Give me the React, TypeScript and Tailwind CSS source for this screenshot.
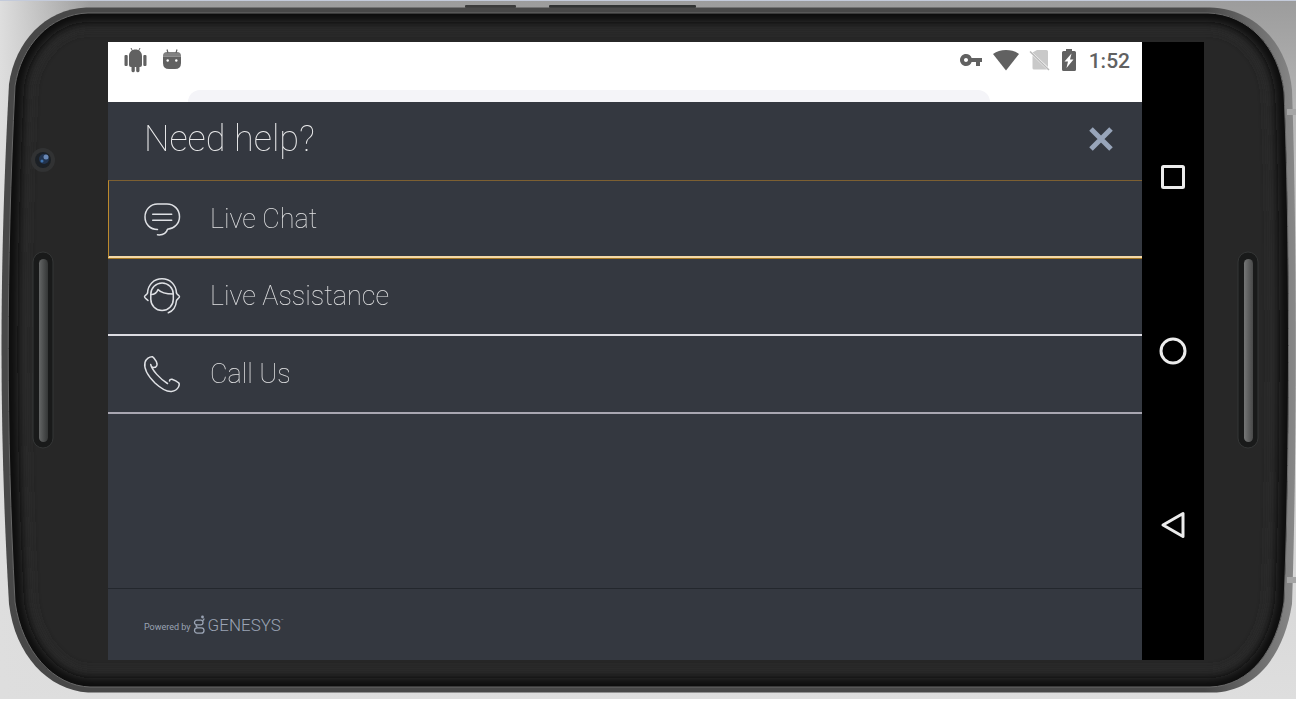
import type { ReactNode } from 'react'
import { MdVpnKey } from 'react-icons/md'

const CASE_PATH =
    'M86 7.5 H1210 C1256 9 1288 45 1292 90 C1297 230 1297 460 1292 604 C1284 655 1256 692 1212 692.5 H88 C48 690 15 655 9 604 C-1 430 -1 270 9 84 C15 42 45 9 86 7.5 Z'

const BEZEL_PATH =
    'M88 13 H1208 C1248 14 1279 47 1284 92 C1290 230 1290 460 1284 602 C1277 650 1250 686 1210 687 H90 C54 686 22 652 15 602 C6 430 6 270 15 86 C21 46 50 14 88 13 Z'

function Speaker({ x, fill }: { x: number; fill: string }) {
    return (
        <g>
            <rect x={x} y="252" width="20" height="196" rx="10" fill="#191a1a" stroke="#343636" />
            <rect x={x + 6} y="259" width="9" height="183" rx="4.5" fill={fill} />
        </g>
    )
}

function PhoneCase() {
    return (
        <svg
            viewBox="0 0 1296 703"
            preserveAspectRatio="none"
            className="absolute inset-0 h-full w-full"
            aria-hidden="true"
        >
            <defs>
                <linearGradient id="table" x1="0" y1="0" x2="0" y2="1">
                    <stop offset="0" stopColor="#9c9c9c" />
                    <stop offset="0.25" stopColor="#c4c4c4" />
                    <stop offset="1" stopColor="#dedede" />
                </linearGradient>
                <linearGradient id="glow" x1="0" y1="0" x2="1" y2="0">
                    <stop offset="0" stopColor="#dedede" />
                    <stop offset="0.07" stopColor="#dedede" stopOpacity="0" />
                </linearGradient>
                <linearGradient id="rim" x1="0" y1="0" x2="1" y2="0">
                    <stop offset="0" stopColor="#484848" />
                    <stop offset="0.93" stopColor="#484848" />
                    <stop offset="1" stopColor="#888888" />
                </linearGradient>
                <linearGradient id="grille" x1="0" y1="0" x2="1" y2="0">
                    <stop offset="0" stopColor="#646666" />
                    <stop offset="1" stopColor="#343636" />
                </linearGradient>
                <linearGradient id="grilleRight" x1="0" y1="0" x2="1" y2="0">
                    <stop offset="0" stopColor="#767777" />
                    <stop offset="1" stopColor="#484949" />
                </linearGradient>
                <filter id="soft" x="-5%" y="-5%" width="110%" height="110%">
                    <feGaussianBlur stdDeviation="4" />
                </filter>
                <clipPath id="bezel">
                    <path d={BEZEL_PATH} />
                </clipPath>
            </defs>

            <rect width="1296" height="699" fill="url(#table)" />
            <rect width="1296" height="699" fill="url(#glow)" />
            <rect width="1296" height="1" fill="#c4cbdb" />
            <rect y="699" width="1296" height="4" fill="#ffffff" />

            {/* power and volume keys */}
            <rect x="465" y="5" width="51" height="3" rx="1" fill="#3c3c3c" />
            <rect x="549" y="5" width="147" height="3" rx="1" fill="#303232" />

            <path d={CASE_PATH} fill="url(#rim)" />
            <rect x="1287" y="109" width="9" height="6" fill="#a5a5a5" />
            <rect x="1287" y="577" width="9" height="6" fill="#a5a5a5" />
            <path d={BEZEL_PATH} fill="#272727" />
            <g clipPath="url(#bezel)">
                <path d={BEZEL_PATH} fill="none" stroke="#2b2b2b" strokeWidth="36" filter="url(#soft)" />
                <path d={BEZEL_PATH} fill="none" stroke="#0c0c0c" strokeWidth="18" filter="url(#soft)" />
            </g>
            <path d={BEZEL_PATH} fill="none" stroke="#686868" />

            <circle cx="43" cy="160" r="12" fill="#313233" />
            <circle cx="43" cy="160" r="8" fill="#1c2025" />
            <circle cx="44" cy="159" r="5" fill="#22344f" />
            <circle cx="46" cy="157" r="2.5" fill="#6887b5" />
            <circle cx="42" cy="161" r="1.5" fill="#3f74b0" />

            <Speaker x={33} fill="url(#grille)" />
            <Speaker x={1238} fill="url(#grilleRight)" />
        </svg>
    )
}

function StatusBar() {
    return (
        <div className="bg-white">
            <div className="flex h-9 items-center justify-between pr-3 pl-4 text-[#616161]">
                <div className="flex items-center gap-4">
                    <svg viewBox="0 0 23 26" className="h-[26px] w-[23px]" fill="currentColor">
                        <path d="M5 9C5 5 8 2.500 11.500 2.500S18 5 18 9V18Q18 20 16 20H15.500V24A1.700 1.700 0 0 1 12.200 24V20H10.800V24A1.700 1.700 0 0 1 7.500 24V20H7Q5 20 5 18Z" />
                        <rect x="0.500" y="8" width="3.200" height="11" rx="1" />
                        <rect x="19.300" y="8" width="3.200" height="11" rx="1" />
                        <path d="M7 1l1.500 3M16 1l-1.500 3" stroke="currentColor" />
                    </svg>
                    <svg viewBox="1 0 18 22" className="h-[22px] w-[18px]" fill="currentColor">
                        <path d="M1 7Q1 3 5 3H15Q19 3 19 7V7.500H1Z" opacity="0.8" />
                        <path d="M1 7.500H19V14Q19 20 13 20H7Q1 20 1 14Z" />
                        <path d="M5 0.500L6 4M15 0.500L14 4" stroke="currentColor" strokeWidth="1.200" />
                        <circle cx="5.700" cy="11.500" r="1.200" fill="#fff" />
                        <circle cx="14.300" cy="11.500" r="1.200" fill="#fff" />
                    </svg>
                </div>
                <div className="flex items-center gap-2.5">
                    <MdVpnKey className="size-6" />
                    <svg viewBox="0 0 26 22" className="h-[22px] w-[26px]" fill="currentColor">
                        <path d="M0 5Q5.500 1 13 1T26 5L13 21.500Z" />
                    </svg>
                    <svg viewBox="0 0 22 22" className="size-[22px]">
                        <path d="M8 1H17.500Q19 1 19 2.500V18L3.500 3.500Z" fill="#c9c9c9" />
                        <path d="M3.500 6.500L18 20.500H5Q3.500 20.500 3.500 19Z" fill="#c9c9c9" />
                        <path d="M1 2.500L20 21" stroke="#b9b9b9" strokeWidth="1.500" />
                    </svg>
                    <div className="flex items-center gap-3">
                        <svg viewBox="0 0 16 24" className="h-6 w-4" fill="currentColor">
                            <path d="M5 1H11V3H13.500Q15 3 15 4.500V21.500Q15 23 13.500 23H2.500Q1 23 1 21.500V4.500Q1 3 2.500 3H5Z" />
                            <path d="M10.500 5.500L3.500 13.500H7L5.500 20L12.500 11.500H9Z" fill="#fff" />
                        </svg>
                        <time className="pt-0.5 text-[21px] leading-6 font-medium">1:52</time>
                    </div>
                </div>
            </div>
            {/* top edge of the page underneath */}
            <div className="mt-3 mr-[152px] ml-20 h-3 rounded-t-2xl bg-[#f4f4f8]" />
        </div>
    )
}

function ChatIcon() {
    return (
        <>
            <path d="M14.500 29.500C7 29.500 2 24 2 17C2 9.500 7.500 4 14.500 4H24C31 4 36.500 9.500 36.500 16.700C36.500 23.500 31.500 28.500 24.500 29.300C23.500 33 20 35.300 14.500 34.800" />
            <path d="M9.700 14.300H28.700M9.700 20.300H28.700" />
        </>
    )
}

function AgentIcon() {
    return (
        <>
            <rect x="7.800" y="6" width="22.500" height="27.500" rx="11.250" />
            <path d="M8 17.500C11 17.500 14 15.500 15 12.500C18 16 23 17 30.300 17" />
            <path d="M4.500 16C5 7.500 11 1.800 19 1.800S33 7.500 33.500 16" />
            <path d="M4.500 16C3.800 18 1.500 18.500 1.500 19.800S3.500 22 5 23.500" />
            <path d="M33.500 16C34.200 18 36.500 18.500 36.500 19.800S34 22 33.500 23.500C33 29 30.500 34 25.300 35.700" />
        </>
    )
}

function PhoneIcon() {
    return (
        <path d="M7.700 9.500C8.500 13 10 12.500 12.500 12.300C14.500 10.500 14.500 9 13.500 7C12 4.500 11 2.500 9.500 1.800C6.500 1.500 3 4 2 7.500C0.500 14 5 21 12 28C18 33.500 23 37 28.500 36.500C32 36 34.500 34 35.500 32C36.500 30 36.500 28.500 35.500 27.700C33.500 26 31 25 29 24.300C27.500 24 26.500 25 26.500 26M7.700 9.500C9 15 17 24 24.500 28.500" />
    )
}

const CHANNELS: { label: string; icon: ReactNode; className: string }[] = [
    {
        label: 'Live Chat',
        icon: <ChatIcon />,
        className:
            'relative border-t border-l border-b-2 border-t-[#7d6032] border-l-[#bd8a2c] border-b-[#f3d9a8] pl-[35px] shadow-[0_1px_0_#a67824]',
    },
    { label: 'Live Assistance', icon: <AgentIcon />, className: 'border-b-2 border-[#dcdce2] pl-9' },
    { label: 'Call Us', icon: <PhoneIcon />, className: 'border-b-2 border-[#a9a7b2] pl-9' },
]

function HelpPanel() {
    return (
        <section className="flex flex-1 flex-col bg-[#343840]">
            <header className="flex h-[78px] items-center justify-between pr-7 pb-1 pl-9">
                <h1 className="text-4xl leading-[44px] font-thin text-white opacity-90">Need help?</h1>
                <button type="button" aria-label="Close" className="text-[#98a5ba]">
                    <svg viewBox="0 0 26 26" className="size-[26px]" stroke="currentColor" strokeWidth="5">
                        <path d="M3 3L23 23M23 3L3 23" />
                    </svg>
                </button>
            </header>

            <ul>
                {CHANNELS.map((c) => (
                    <li key={c.label}>
                        <button
                            type="button"
                            className={`flex h-[78px] w-full items-center gap-[30px] text-left text-[27px] leading-8 font-thin text-white ${c.className}`}
                        >
                            <svg
                                viewBox="1 1 36 36"
                                className="size-9 overflow-visible"
                                fill="none"
                                stroke="#dfe1e5"
                                strokeWidth="1.500"
                                strokeLinecap="round"
                                strokeLinejoin="round"
                            >
                                {c.icon}
                            </svg>
                            <span className="opacity-85">{c.label}</span>
                        </button>
                    </li>
                ))}
            </ul>

            <footer className="mt-auto flex h-[72px] items-center border-t border-[#23272d] pl-9 text-[#9aa3b3]">
                <span className="pt-1 text-[9px] leading-4">Powered by</span>
                <svg viewBox="0 0 13 20" className="ml-0.5 h-5 w-[13px]" fill="none" stroke="currentColor" strokeWidth="1.300">
                    <circle cx="9.500" cy="2" r="1.400" fill="currentColor" stroke="none" />
                    <rect x="1.500" y="5.200" width="8.500" height="4.600" rx="2.300" />
                    <path d="M9.500 5.700Q11 5 11 3.500M3.500 9.800Q2.500 11.500 4.500 12.300" />
                    <rect x="1.500" y="12.800" width="9.500" height="5.400" rx="2.700" />
                </svg>
                <span className="ml-0.5 text-[17px] leading-5 font-light">GENESYS</span>
                <span className="self-center pb-2 text-[4px] leading-none">™</span>
            </footer>
        </section>
    )
}

function NavBar() {
    return (
        <nav className="flex w-[62px] flex-col items-center justify-center gap-[126px] bg-black">
            {[
                { name: 'Recent apps', shape: <rect x="3.500" y="3.500" width="21" height="21" rx="1" /> },
                { name: 'Home', shape: <circle cx="14" cy="14" r="12" /> },
                { name: 'Back', shape: <path d="M24 2.500V25.500L4 14Z" /> },
            ].map((b) => (
                <button key={b.name} type="button" aria-label={b.name} className="flex size-12 items-center justify-center">
                    <svg
                        viewBox="0 0 28 28"
                        className="size-7"
                        fill="none"
                        stroke="#ececec"
                        strokeWidth="3"
                        strokeLinejoin="round"
                    >
                        {b.shape}
                    </svg>
                </button>
            ))}
        </nav>
    )
}

export default function App() {
    return (
        <div className="relative flex min-h-screen font-[Roboto,'Liberation_Sans',sans-serif]">
            <PhoneCase />
            <div className="relative mt-[42px] mr-[92px] mb-[43px] ml-[108px] flex flex-1">
                <main className="flex flex-1 flex-col">
                    <StatusBar />
                    <HelpPanel />
                </main>
                <NavBar />
            </div>
        </div>
    )
}
